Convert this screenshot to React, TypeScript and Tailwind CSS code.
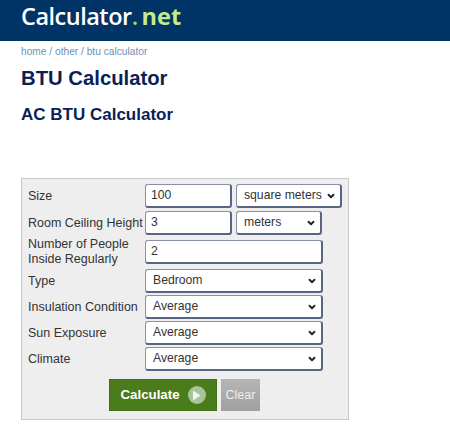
import { ChevronDown } from "lucide-react"

const fieldCls =
  "h-[24px] rounded-[3px] border border-[#8a92a6] border-b-2 border-r-2 border-b-[#5a6585] border-r-[#5a6585] bg-white text-[12.2px] text-[#333] flex items-center whitespace-nowrap"

function Field({ value, className }: { value: string; className: string }) {
  return <div className={`${fieldCls} pl-[5px] ${className}`}>{value}</div>
}

function Select({ value, className }: { value: string; className: string }) {
  return (
    <div className={`${fieldCls} pl-[7px] pr-[4px] justify-between ${className}`}>
      <span>{value}</span>
      <ChevronDown className="w-[10px] h-[10px] text-[#222]" strokeWidth={4.5} />
    </div>
  )
}

function Row({ label, className, children }: { label: string; className: string; children: React.ReactNode }) {
  return (
    <div className={`flex items-center ${className}`}>
      <div className="w-[117px] shrink-0 text-[12.5px] leading-[15px] text-[#333]">{label}</div>
      <div className="flex gap-[4px]">{children}</div>
    </div>
  )
}

export default function App() {
  return (
    <div className="w-[450px] h-[436px] overflow-hidden bg-white font-['Liberation_Sans',Arial,sans-serif]">
      {/* Header */}
      <header className="h-[41px] bg-[#003366] pl-[21px] pb-[7px] flex items-center">
        <span className="font-['Open_Sans',sans-serif] font-semibold text-[23.5px] leading-none tracking-[-0.5px] text-white">
          Calculator<span className="text-[#a5d97a]">.</span>
          <span className="ml-[4px] text-[#c4ea8c] font-bold tracking-normal">net</span>
        </span>
      </header>

      <div className="pl-[21px]">
        <div className="mt-[4px] text-[10.2px] leading-[13px] text-[#6d8fb5]">home / other / btu calculator</div>
        <h1 className="mt-[8px] text-[20.3px] leading-[25px] font-bold text-[#0c1f55]">BTU Calculator</h1>
        <h2 className="mt-[13px] text-[17px] leading-[21px] font-bold text-[#0c1f55]">AC BTU Calculator</h2>

        {/* Form */}
        <div className="mt-[53px] w-[328px] h-[242px] border border-[#c8c8c8] bg-[#eeeeee] pl-[6px] pt-[5px]">
          <Row label="Size" className="h-[24px]">
            <Field value="100" className="w-[87px]" />
            <Select value="square meters" className="w-[106px]" />
          </Row>
          <Row label="Room Ceiling Height" className="h-[24px] mt-[3px] whitespace-nowrap">
            <Field value="3" className="w-[87px]" />
            <Select value="meters" className="w-[86px]" />
          </Row>
          <Row label="Number of People Inside Regularly" className="h-[30px] mt-[2px]">
            <Field value="2" className="w-[178px]" />
          </Row>
          <Row label="Type" className="h-[24px] mt-[2px]">
            <Select value="Bedroom" className="w-[178px]" />
          </Row>
          <Row label="Insulation Condition" className="h-[24px] mt-[2px] whitespace-nowrap">
            <Select value="Average" className="w-[178px]" />
          </Row>
          <Row label="Sun Exposure" className="h-[24px] mt-[2px]">
            <Select value="Average" className="w-[178px]" />
          </Row>
          <Row label="Climate" className="h-[24px] mt-[2px]">
            <Select value="Average" className="w-[178px]" />
          </Row>

          {/* Buttons */}
          <div className="flex gap-[4px] mt-[8px] ml-[81px]">
            <div className="w-[108px] h-[32px] bg-[#4a7c1c] border border-[#3f7015] flex items-center justify-center gap-[8px]">
              <span className="text-[13.3px] font-bold text-white">Calculate</span>
              <span className="w-[18px] h-[18px] rounded-full bg-[#a8c49a] flex items-center justify-center">
                <svg width="9" height="11" viewBox="0 0 9 11">
                  <path d="M1 0.5 L8.5 5.5 L1 10.5 Z" fill="#f2f5ee" />
                </svg>
              </span>
            </div>
            <div className="w-[39px] h-[32px] bg-gradient-to-b from-[#b5b5b5] to-[#a0a0a0] flex items-center justify-center text-[12.5px] text-[#eeeeee]">
              Clear
            </div>
          </div>
        </div>
      </div>
    </div>
  )
}
